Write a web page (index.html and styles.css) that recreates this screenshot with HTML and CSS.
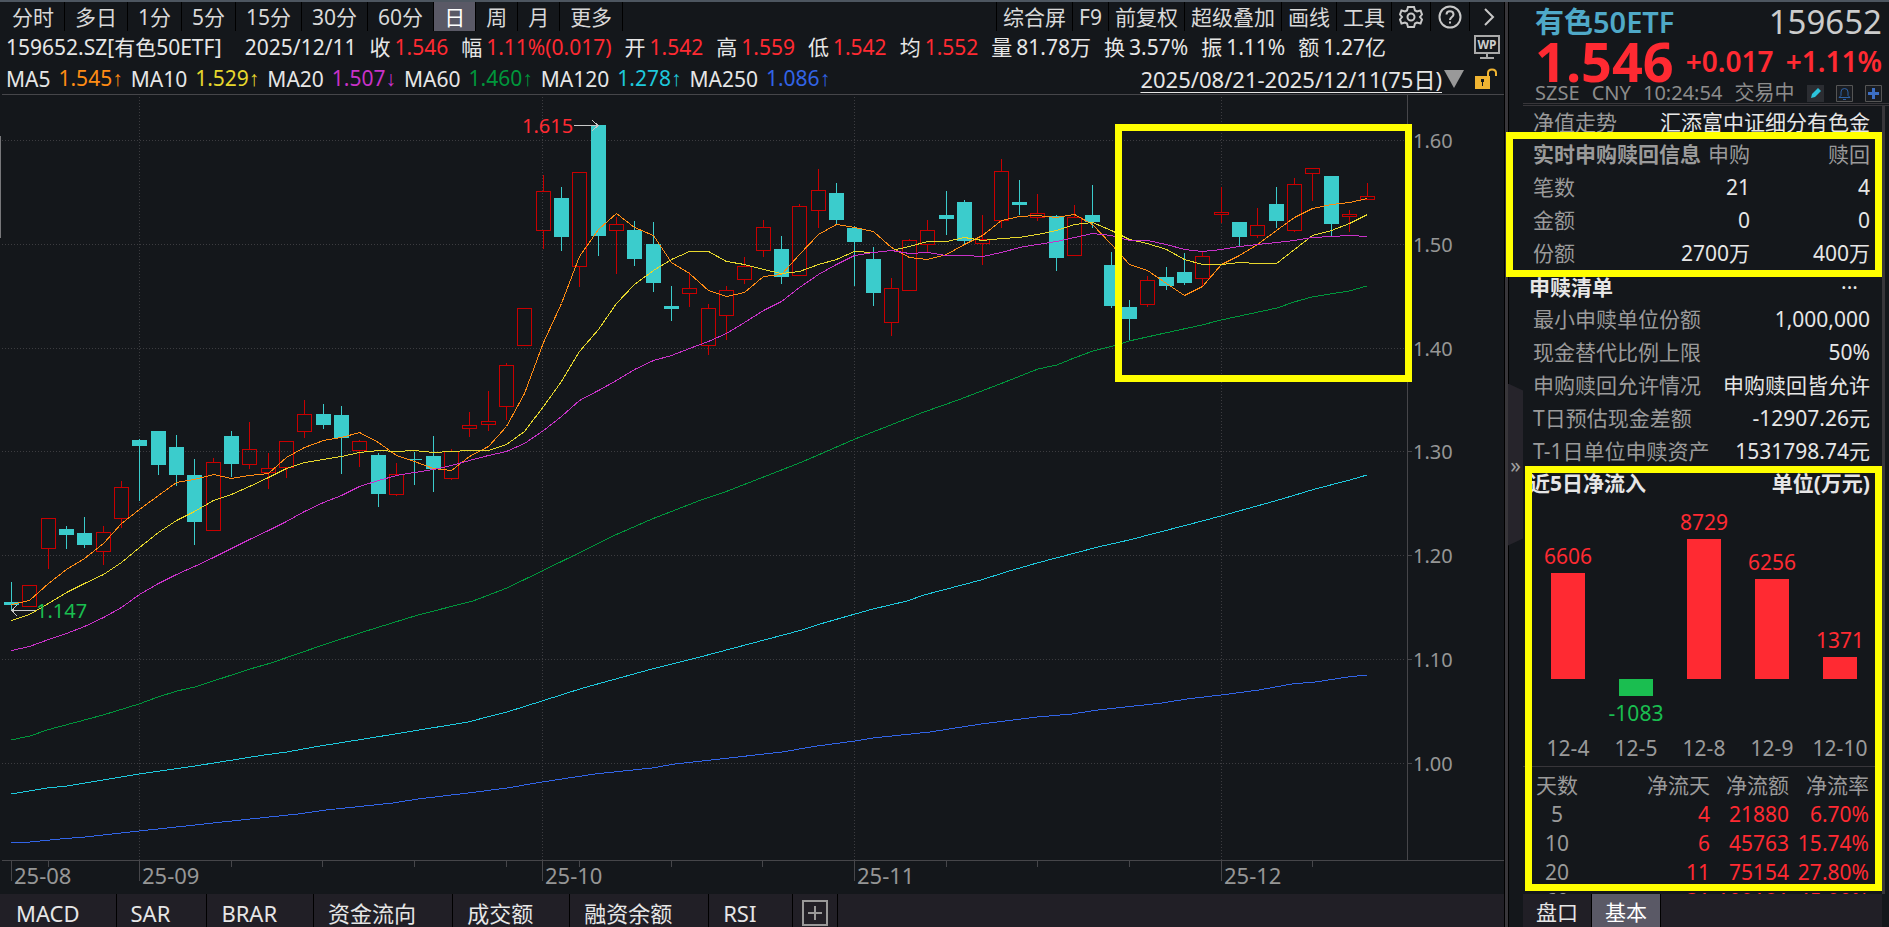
FILE: index.html
```html
<!DOCTYPE html>
<html lang="zh-CN">

    <head>
        <meta charset="utf-8">
        <title>159652.SZ 有色50ETF</title>
        <link rel="stylesheet" href="styles.css">
    </head>

    <body>
        <div class="app">
            <main class="main">
                <nav class="toolbar">
                    <button>分时</button>
                    <button>多日</button>
                    <button>1分</button>
                    <button>5分</button>
                    <button>15分</button>
                    <button>30分</button>
                    <button>60分</button>
                    <button class="active">日</button>
                    <button>周</button>
                    <button>月</button>
                    <button>更多</button>
                    <div class="tools">
                        <button>综合屏</button>
                        <button>F9</button>
                        <button>前复权</button>
                        <button>超级叠加</button>
                        <button>画线</button>
                        <button>工具</button>
                        <button class="tool-icon" aria-label="设置">
                            <svg class="icon" viewBox="0 0 24 24"><path d="M9 2h6l1 3.500 2 1 3.500-1 1.500 4-2 2.500 2 2.500-1.500 4-3.500-1-2 1-1 3.500H9l-1-3.500-2-1-3.500 1L1 14.500 3 12 1 9.500l1.500-4 3.500 1 2-1z"/><circle cx="12" cy="12" r="3.500"/></svg>
                        </button>
                        <button class="tool-icon" aria-label="帮助">
                            <svg class="icon" viewBox="0 0 24 24"><circle cx="12" cy="12" r="10.500"/><path d="M8.500 9.500c0-4.500 7-4.500 7 0 0 2.500-3.500 2.500-3.500 5.500M12 16.500v2"/></svg>
                        </button>
                        <button class="tool-icon" aria-label="展开">
                            <svg class="icon" viewBox="0 0 24 24"><path d="M8 4l8 8-8 8"/></svg>
                        </button>
                    </div>
                </nav>

                <div class="quote">
                    <span class="symbol">159652.SZ[有色50ETF]</span>
                    <span>2025/12/11</span>
                    <span>收<b>1.546</b></span>
                    <span>幅<b>1.11%(0.017)</b></span>
                    <span>开<b>1.542</b></span>
                    <span>高<b>1.559</b></span>
                    <span>低<b>1.542</b></span>
                    <span>均<b>1.552</b></span>
                    <span>量<i>81.78万</i></span>
                    <span>换<i>3.57%</i></span>
                    <span>振<i>1.11%</i></span>
                    <span>额<i>1.27亿</i></span>
                    <svg class="wp" viewBox="0 0 26 26"><path d="M1 2h24v17H1zM13 19v4M6 24h14"/><text x="13" y="15">WP</text></svg>
                </div>

                <div class="averages">
                    <span>MA5</span><span class="ma5">1.545<i>↑</i></span>
                    <span>MA10</span><span class="ma10">1.529<i>↑</i></span>
                    <span>MA20</span><span class="ma20">1.507<i>↓</i></span>
                    <span>MA60</span><span class="ma60">1.460<i>↑</i></span>
                    <span>MA120</span><span class="ma120">1.278<i>↑</i></span>
                    <span>MA250</span><span class="ma250">1.086<i>↑</i></span>
                    <div class="range">
                        <a href="#range">2025/08/21-2025/12/11(75日)</a>
                        <svg class="arrow" viewBox="0 0 20 20"><path d="M0 1h20L10 19z"/></svg>
                        <svg class="lock" viewBox="0 0 24 22"><path d="M1 8h15v13H1z" fill="#f0b432"/><path d="M14 8V5q0-3.500 4-3.500T22 5v3" fill="none" stroke="#f0b432" stroke-width="2"/><path d="M7 11h3v3H9v4H8v-4H7z" fill="#14171b"/></svg>
                    </div>
                </div>

                <svg class="chart" id="chart" viewBox="0 94 1504 800"></svg>

                <nav class="indicators">
                    <button>MACD</button>
                    <button>SAR</button>
                    <button>BRAR</button>
                    <button>资金流向</button>
                    <button>成交额</button>
                    <button>融资余额</button>
                    <button>RSI</button>
                    <button class="add" aria-label="添加指标">
                        <svg viewBox="0 0 26 26"><path d="M1 1h24v24H1zM13 6v14M6 13h14"/></svg>
                    </button>
                </nav>
            </main>

            <div class="splitter">
                <button class="collapse">»</button>
            </div>

            <aside class="side">
                <header class="head">
                    <div class="head-row">
                        <h1>有色50ETF</h1>
                        <span class="code">159652</span>
                    </div>
                    <div class="head-row price-row">
                        <strong class="price">1.546</strong>
                        <strong class="change">+0.017</strong>
                        <strong class="change">+1.11%</strong>
                    </div>
                    <div class="head-row status">
                        <span>SZSE</span>
                        <span>CNY</span>
                        <span>10:24:54</span>
                        <span>交易中</span>
                        <svg class="badge" viewBox="0 0 17 17"><path d="M0 0h17v17H0z" fill="#2b2d32"/><path d="M4 13l1-4 6-6 3 3-6 6z" fill="#2cc4dc"/></svg>
                        <svg class="badge" viewBox="0 0 17 17"><path d="M.5.5h16v16H.5z" fill="#1a1d22" stroke="#555"/><path d="M3 12.500h11l-2-2V7q0-3.500-3.500-3.500T5 7v3.500zM7 14.500h3" fill="none" stroke="#2d62a8"/></svg>
                        <svg class="badge" viewBox="0 0 17 17"><path d="M.5.5h16v16H.5z" fill="#1a1d22" stroke="#555"/><path d="M8.500 3v11M3 8.500h11" stroke="#3c6fc4" stroke-width="3"/></svg>
                    </div>
                </header>

                <div class="info">
                    <div class="row fund"><span>净值走势</span><em>汇添富中证细分有色金</em></div>
                    <table class="orders">
                        <tr><th class="title">实时申购赎回信息</th><th>申购</th><th>赎回</th></tr>
                        <tr><th>笔数</th><td>21</td><td>4</td></tr>
                        <tr><th>金额</th><td>0</td><td>0</td></tr>
                        <tr><th>份额</th><td>2700万</td><td>400万</td></tr>
                    </table>
                    <div class="row section listing"><h2>申赎清单</h2><button class="more" aria-label="更多">···</button></div>
                    <div class="row"><span>最小申赎单位份额</span><em>1,000,000</em></div>
                    <div class="row"><span>现金替代比例上限</span><em>50%</em></div>
                    <div class="row"><span>申购赎回允许情况</span><em>申购赎回皆允许</em></div>
                    <div class="row"><span>T日预估现金差额</span><em>-12907.26元</em></div>
                    <div class="row"><span>T-1日单位申赎资产</span><em>1531798.74元</em></div>
                    <div class="row section inflow"><h2>近5日净流入</h2><h2>单位(万元)</h2></div>
                    <div class="bars" id="bars"></div>
                    <table class="flows">
                        <tr><th>天数</th><th>净流天</th><th>净流额</th><th>净流率</th></tr>
                        <tr><th>5</th><td>4</td><td>21880</td><td>6.70%</td></tr>
                        <tr><th>10</th><td>6</td><td>45763</td><td>15.74%</td></tr>
                        <tr><th>20</th><td>11</td><td>75154</td><td>27.80%</td></tr>
                        <tr><th>60</th><td>31</td><td>109181</td><td>45.90%</td></tr>
                    </table>
                </div>

                <nav class="side-tabs">
                    <button>盘口</button>
                    <button class="active">基本</button>
                </nav>
                <div class="mark mark-orders"></div>
                <div class="mark mark-flows"></div>
            </aside>
        </div>

        <script src="script.js"></script>
    </body>

</html>
```

FILE: styles.css
```css
* {
    box-sizing: border-box;
}
body {
    margin: 0;
    background: #14171b;
    color: #e6e6e6;
    font-family: "Noto Sans", "Noto Sans CJK SC", sans-serif;
    font-size: 21px;
    line-height: 30px;
}
button {
    margin: 0;
    padding: 0;
    border: 0;
    background: none;
    color: inherit;
    font: inherit;
}
b, i, em {
    font-weight: normal;
    font-style: normal;
}
h1, h2 {
    margin: 0;
}
.app {
    display: grid;
    grid-template-columns: minmax(0, 1fr) 19px 366px;
    height: 100vh;
    border-top: 2px solid #4d5660;
    overflow: hidden;
}
.main {
    display: flex;
    flex-direction: column;
    min-height: 0;
}

/* period toolbar */
.toolbar {
    display: flex;
    flex: none;
    height: 29px;
    padding-left: 2px;
}
.toolbar button {
    padding: 0 10px;
    border-right: 1px solid #000;
    line-height: 26px;
    white-space: nowrap;
    color: #d8d8d8;
}
.toolbar .active {
    background: #5a5966;
    color: #fff;
}
.tools {
    display: flex;
    margin-left: auto;
    border-left: 1px solid #000;
}
.tools button {
    padding: 0 6px;
}
.tools .tool-icon {
    padding: 0 7px;
}
.tools .tool-icon:last-child {
    padding-right: 3px;
    border-right: 0;
}
.icon {
    display: block;
    width: 24px;
    height: 24px;
    fill: none;
    stroke: #c8c8c8;
    stroke-width: 2;
}

/* quote and moving average lines */
.quote {
    display: flex;
    flex: none;
    align-items: center;
    gap: 13px;
    height: 32px;
    padding: 0 4px 0 6px;
    white-space: nowrap;
}
.symbol {
    margin-right: 10px;
}
.quote b, .quote i {
    margin-left: 4px;
}
.quote b {
    color: #ff2a32;
}
.wp {
    width: 26px;
    height: 26px;
    margin-left: auto;
    fill: none;
    stroke: #aaa;
    stroke-width: 2;
}
.wp text {
    fill: #ccc;
    stroke: none;
    font-size: 12px;
    font-weight: bold;
    text-anchor: middle;
}
.averages {
    display: flex;
    flex: none;
    align-items: center;
    gap: 8px;
    height: 31px;
    padding: 0 6px;
    white-space: nowrap;
}
.averages i {
    font-family: "Liberation Sans", sans-serif;
}
.ma5 {
    color: #ff8c14;
}
.ma10 {
    color: #e6d72d;
}
.ma20 {
    color: #c832c8;
}
.ma60 {
    color: #00963c;
}
.ma120 {
    color: #1ec8dc;
}
.ma250 {
    color: #3264e6;
}
.range {
    display: flex;
    align-items: center;
    gap: 2px;
    margin-left: auto;
}
.range a {
    color: #e6e6e6;
    font-size: 22px;
    text-underline-offset: 4px;
    text-decoration-thickness: 1px;
}
.arrow {
    width: 20px;
    height: 20px;
    fill: #999;
}
.lock {
    width: 24px;
    height: 22px;
    margin-left: 8px;
}

/* candle chart */
.chart {
    display: block;
    width: 100%;
    flex: none;
    font-size: 20px;
}
.chart path, .chart rect {
    fill: none;
    shape-rendering: crispEdges;
}
.chart .grid {
    stroke: #3c3c40;
    stroke-dasharray: 1 2;
}
.chart .axis {
    stroke: #46464a;
}
.chart .up {
    stroke: #c80000;
}
.chart .down {
    fill: #3bcccc;
    stroke: #3bcccc;
}
.chart .line {
    stroke: currentColor;
}
.chart .pointer {
    stroke: #c8c8c8;
}
.chart .label {
    fill: #969696;
}
.chart .month {
    fill: #969696;
    font-size: 22px;
}
.chart .high {
    fill: #ff2a32;
}
.chart .low {
    fill: #1abe50;
}
.chart .frame {
    stroke: #ff0;
    stroke-width: 7;
}
.chart .scroll {
    fill: #77777a;
}

.indicators {
    display: flex;
    flex: 1 0 33px;
    padding-left: 2px;
    background: #211f26;
    font-size: 22px;
}
.indicators button {
    padding: 5px 36px 0 14px;
    border-right: 1px solid #000;
    line-height: 28px;
    white-space: nowrap;
}
.indicators .add {
    padding: 5px 9px 0;
}
.add svg {
    display: block;
    width: 26px;
    height: 26px;
    fill: none;
    stroke: #999;
    stroke-width: 2;
}

.splitter {
    display: flex;
    align-items: center;
    padding-left: 4px;
    background: linear-gradient(to right, #000 1px, #38363a 1px 4px, #000 4px 5px, #14171b 5px);
}
.collapse {
    width: 15px;
    height: 162px;
    background: #26242b;
    color: #a0a0a0;
    clip-path: polygon(0 0, 100% 7px, 100% 155px, 0 100%);
}

/* right hand panel */
.side {
    position: relative;
    display: flex;
    flex-direction: column;
    min-height: 0;
}
.head {
    height: 104px;
    padding: 0 7px 0 12px;
    border-bottom: 3px double #38363a;
    line-height: 40px;
    overflow: hidden;
}
.head-row {
    display: flex;
    align-items: center;
    justify-content: space-between;
    height: 40px;
}
h1 {
    color: #4fa9c8;
    font-size: 29px;
    font-weight: 600;
}
.code {
    color: #ccc;
    font-size: 33px;
}
.price-row {
    height: 37px;
    color: #ff2a32;
}
.price {
    font-size: 54px;
}
.change {
    font-size: 28px;
    font-weight: 600;
}
.status {
    height: 28px;
    color: #8c8c8c;
    font-size: 20px;
    line-height: 24px;
}
.badge {
    width: 17px;
    height: 17px;
}
.info {
    flex: 1;
    min-height: 0;
    margin-right: 4px;
    border-right: 3px solid #38363a;
    overflow: hidden;
}
.row {
    display: flex;
    justify-content: space-between;
    height: 33px;
    padding: 0 12px 0 10px;
    line-height: 33px;
    color: #9a9a9a;
    white-space: nowrap;
}
.row em {
    color: #e6e6e6;
}
.fund {
    height: 31px;
}
.section {
    padding-left: 6px;
    color: #e6e6e6;
}
.listing {
    height: 34px;
    padding-top: 2px;
}
.inflow {
    line-height: 30px;
}
h2 {
    font-size: 21px;
}
.more {
    padding-right: 12px;
}
table {
    width: 100%;
    border-collapse: collapse;
    table-layout: fixed;
}
th, td {
    padding: 0;
    font-weight: normal;
    text-align: right;
    white-space: nowrap;
}
th {
    color: #9a9a9a;
}
.orders tr {
    height: 33px;
}
.orders th:first-child {
    width: 137px;
    padding-left: 10px;
    text-align: left;
}
.orders th:nth-child(2) {
    width: 90px;
}
.orders td:last-child, .orders th:last-child {
    padding-right: 12px;
}
.orders .title {
    font-weight: bold;
}
.bars {
    display: flex;
    padding: 0 8px 0 11px;
    border-bottom: 1px solid #38363a;
}
.bar {
    flex: 1;
    text-align: center;
    line-height: 34px;
    color: #ff2a32;
}
.bar.out {
    color: #1abe50;
}
.above {
    display: flex;
    flex-direction: column;
    justify-content: flex-end;
    height: 178px;
}
.below {
    height: 52px;
}
.fill {
    width: 50%;
    margin: 0 auto;
    background: currentColor;
}
.date {
    height: 35px;
    color: #9a9a9a;
}
.flows tr {
    height: 29px;
}
.flows th, .flows td {
    line-height: 29px;
}
.flows tr:first-child th {
    padding-top: 4px;
}
.flows td {
    color: #ff2a32;
}
.flows th:first-child {
    width: 68px;
    text-align: center;
}
.flows th:nth-child(3) {
    width: 79px;
}
.flows th:last-child {
    width: 93px;
}
.flows td:last-child, .flows th:last-child {
    padding-right: 13px;
}
.side-tabs {
    display: flex;
    height: 33px;
    margin-right: 7px;
    background: #211f26;
}
.side-tabs button {
    width: 69px;
    padding-top: 4px;
    border-right: 1px solid #000;
    line-height: 29px;
}
.side-tabs .active {
    background: #5a5966;
    color: #fff;
}

/* highlight frames over the panel */
.mark {
    position: absolute;
    right: 7px;
    border: 7px solid #ff0;
    pointer-events: none;
}
.mark-orders {
    top: 130px;
    left: -17px;
    height: 145px;
}
.mark-flows {
    top: 464px;
    left: 2px;
    bottom: 36px;
}
```

FILE: script.js
```
var chart = document.getElementById('chart');
var bars = document.getElementById('bars');
var step = 18.33;

// high, body top, body bottom, low; a trailing 1 marks a falling day
var candles = [
    [582,602,605,611,1],[585,585,607,607],[518,518,549,569],[526,529,535,549,1],[517,533,545,548,1],
    [526,532,552,565],[481,487,519,528],[439,440,446,501,1],[431,431,465,475,1],[435,447,475,486,1],
    [459,475,522,545,1],[458,462,531,531],[431,436,464,477,1],[422,449,465,469],[453,468,473,489],
    [441,441,468,478],[400,414,432,438],[404,414,425,429,1],[406,415,438,474,1],[440,441,451,467],
    [453,455,494,507,1],[463,474,495,496],[452,459,460,485,1],[436,456,469,492,1],[449,451,479,480],
    [412,425,429,437],[391,421,425,431],[363,365,407,420],[308,308,346,346],[175,191,231,249],
    [187,198,237,251,1],[172,172,267,287],[125,125,236,256,1],[217,224,231,274],[221,230,259,266,1],
    [222,244,283,292,1],[286,306,309,321,1],[272,288,294,307],[304,308,346,355],[286,290,316,340],
    [257,266,280,284],[220,227,251,257],[236,249,277,284,1],[204,206,276,276],[169,190,211,228],
    [183,193,220,224,1],[226,228,242,286,1],[247,259,293,306,1],[278,288,323,336],[239,240,291,291],
    [220,230,245,252],[191,215,219,235,1],[200,202,241,244,1],[215,239,244,265],[159,171,221,228],
    [180,202,205,215,1],[194,213,218,221],[215,216,258,271,1],[205,217,256,256],[185,215,222,228,1],
    [252,265,306,308,1],[300,307,319,341,1],[276,280,305,307],[267,277,286,290,1],[253,272,283,285,1],
    [252,256,279,286],[187,212,215,223],[222,222,237,246,1],[208,225,236,238],[187,204,221,228,1],
    [178,184,231,232],[168,168,174,201],[176,176,224,236,1],[210,214,217,232],[183,196,200,200]
];

// one level per day
var daily = {
    ma5: [604,600,583,569,558,543,523,509,495,482,479,474,478,475,473,457,447,440,437,432,442,455,461,468,470,
        456,446,426,393,342,303,256,229,213,227,235,262,273,290,296,292,276,274,254,234,224,227,231,247,257,
        259,254,244,235,220,216,215,217,214,224,244,264,270,283,295,286,264,255,244,230,217,208,204,202,198],
    ma10: [620,614,603,592,583,574,562,547,532,520,511,500,494,486,477,468,462,459,456,452,450,451,450,452,451,
        450,450,444,431,406,381,351,329,303,284,270,259,251,251,261,264,269,273,271,264,259,251,252,250,246,
        241,241,237,240,238,237,234,230,224,222,230,239,243,249,259,264,264,262,263,263,249,235,230,223,214],
    ma20: [650,646,639,633,626,617,607,594,583,574,566,557,548,539,530,521,511,502,495,486,480,475,472,469,465,
        460,455,451,443,430,416,400,390,380,369,360,355,348,341,333,322,310,301,287,274,264,255,252,250,253,
        252,255,255,256,252,247,244,241,237,233,235,240,240,244,249,251,249,246,244,242,240,237,236,235,236]
};

// slow averages as points
var slow = {
    ma60: '11,740 30,736 47,730 103,715 139,704 158,697 177,691 195,687 250,669 271,663 326,644 363,632 418,615 473,601 507,588 542,571 583,551 613,536 652,519 701,500 725,492 802,462 855,439 924,412 958,400 1000,384 1038,369 1057,365 1074,358 1093,351 1113,346 1129,341 1165,333 1202,325 1221,320 1277,308 1294,302 1312,297 1330,294 1349,291 1367,286',
    ma120: '11,794 47,788 67,786 139,774 195,766 264,755 287,752 314,747 395,734 468,722 491,716 507,712 542,701 583,688 652,669 700,657 802,630 820,624 855,614 873,609 907,601 924,595 981,580 1006,572 1037,563 1098,547 1129,540 1187,525 1221,516 1282,499 1315,489 1350,480 1367,475',
    ma250: '11,843 30,842 60,839 85,837 139,831 195,825 250,819 298,814 326,810 393,803 418,799 468,793 507,788 542,782 595,774 652,768 675,764 720,759 782,752 817,746 855,741 873,738 930,732 981,724 1037,717 1072,714 1098,710 1162,703 1187,699 1221,695 1259,690 1292,684 1315,682 1348,677 1367,675'
};

var months = [[11, '25-08'], [139, '25-09'], [542, '25-10'], [854, '25-11'], [1221, '25-12']];
var ticks = [48, 231, 322, 414, 506, 579, 671, 762, 946, 1037, 1129, 1312];
var out = '';

function path(name, d) {
    out += '<path class="' + name + '" d="' + d + '"/>';
}
function text(name, x, y, value) {
    out += '<text class="' + name + '" x="' + x + '" y="' + y + '">' + value + '</text>';
}
function dayX(i) {
    return Math.round(11 + i * step) + 0.5;
}

path('axis', 'M2 94.5H1504M2 860.5H1504M1407.5 94V860');
[140, 244, 348, 451, 555, 659, 763].forEach(function (y, i) {
    path('grid', 'M2 ' + (y + 0.5) + 'H1405');
    path('axis', 'M1407 ' + (y + 0.5) + 'h5');
    text('label', 1413, y + 8, (1.6 - i / 10).toFixed(2));
});
months.forEach(function (month, i) {
    if (i) {
        path('grid', 'M' + (month[0] + 0.5) + ' 97V860');
    }
    path('axis', 'M' + (month[0] + 0.5) + ' 861v20');
    text('month', month[0] + 3, 884, month[1]);
});
ticks.forEach(function (x) {
    path('axis', 'M' + (x + 0.5) + ' 861v6');
});
out += '<rect class="scroll" x="0" y="136" width="1" height="102"/>';

candles.forEach(function (c, i) {
    var x = dayX(i);
    path(c[4] ? 'down' : 'up', 'M' + x + ' ' + c[0] + 'V' + c[1] + 'M' + x + ' ' + c[2] + 'V' + c[3] +
        'M' + (x - 7) + ' ' + (c[1] + 0.5) + 'h14V' + (c[2] - 0.5) + 'h-14z');
});
Object.keys(daily).forEach(function (name) {
    path('line ' + name, 'M' + daily[name].map(function (y, i) {
        return dayX(i) + ' ' + (y + 0.5);
    }).join('L'));
});
Object.keys(slow).forEach(function (name) {
    path('line ' + name, 'M' + slow[name].split(' ').join('L'));
});

path('pointer', 'M574 125.5h24M592 120l6 5.5l-6 5.5');
text('high', 522, 133, '1.615');
path('pointer', 'M35 610.5H12M17 605l-5 5.5l5 5.5');
text('low', 36, 618, '1.147');
out += '<rect class="frame" x="1118.5" y="127.5" width="290" height="251"/>';
chart.innerHTML = out;

// net inflow of the last five days
[['12-4', 6606], ['12-5', -1083], ['12-8', 8729], ['12-9', 6256], ['12-10', 1371]].forEach(function (day) {
    var fill = '<div class="fill" style="height: ' + Math.round(Math.abs(day[1]) / 62.35) + 'px"></div>';
    var up = day[1] > 0;
    bars.innerHTML += '<div class="bar' + (up ? '' : ' out') + '">' +
        '<div class="above">' + (up ? day[1] + fill : '') + '</div>' +
        '<div class="below">' + (up ? '' : fill + day[1]) + '</div>' +
        '<div class="date">' + day[0] + '</div></div>';
});
```
